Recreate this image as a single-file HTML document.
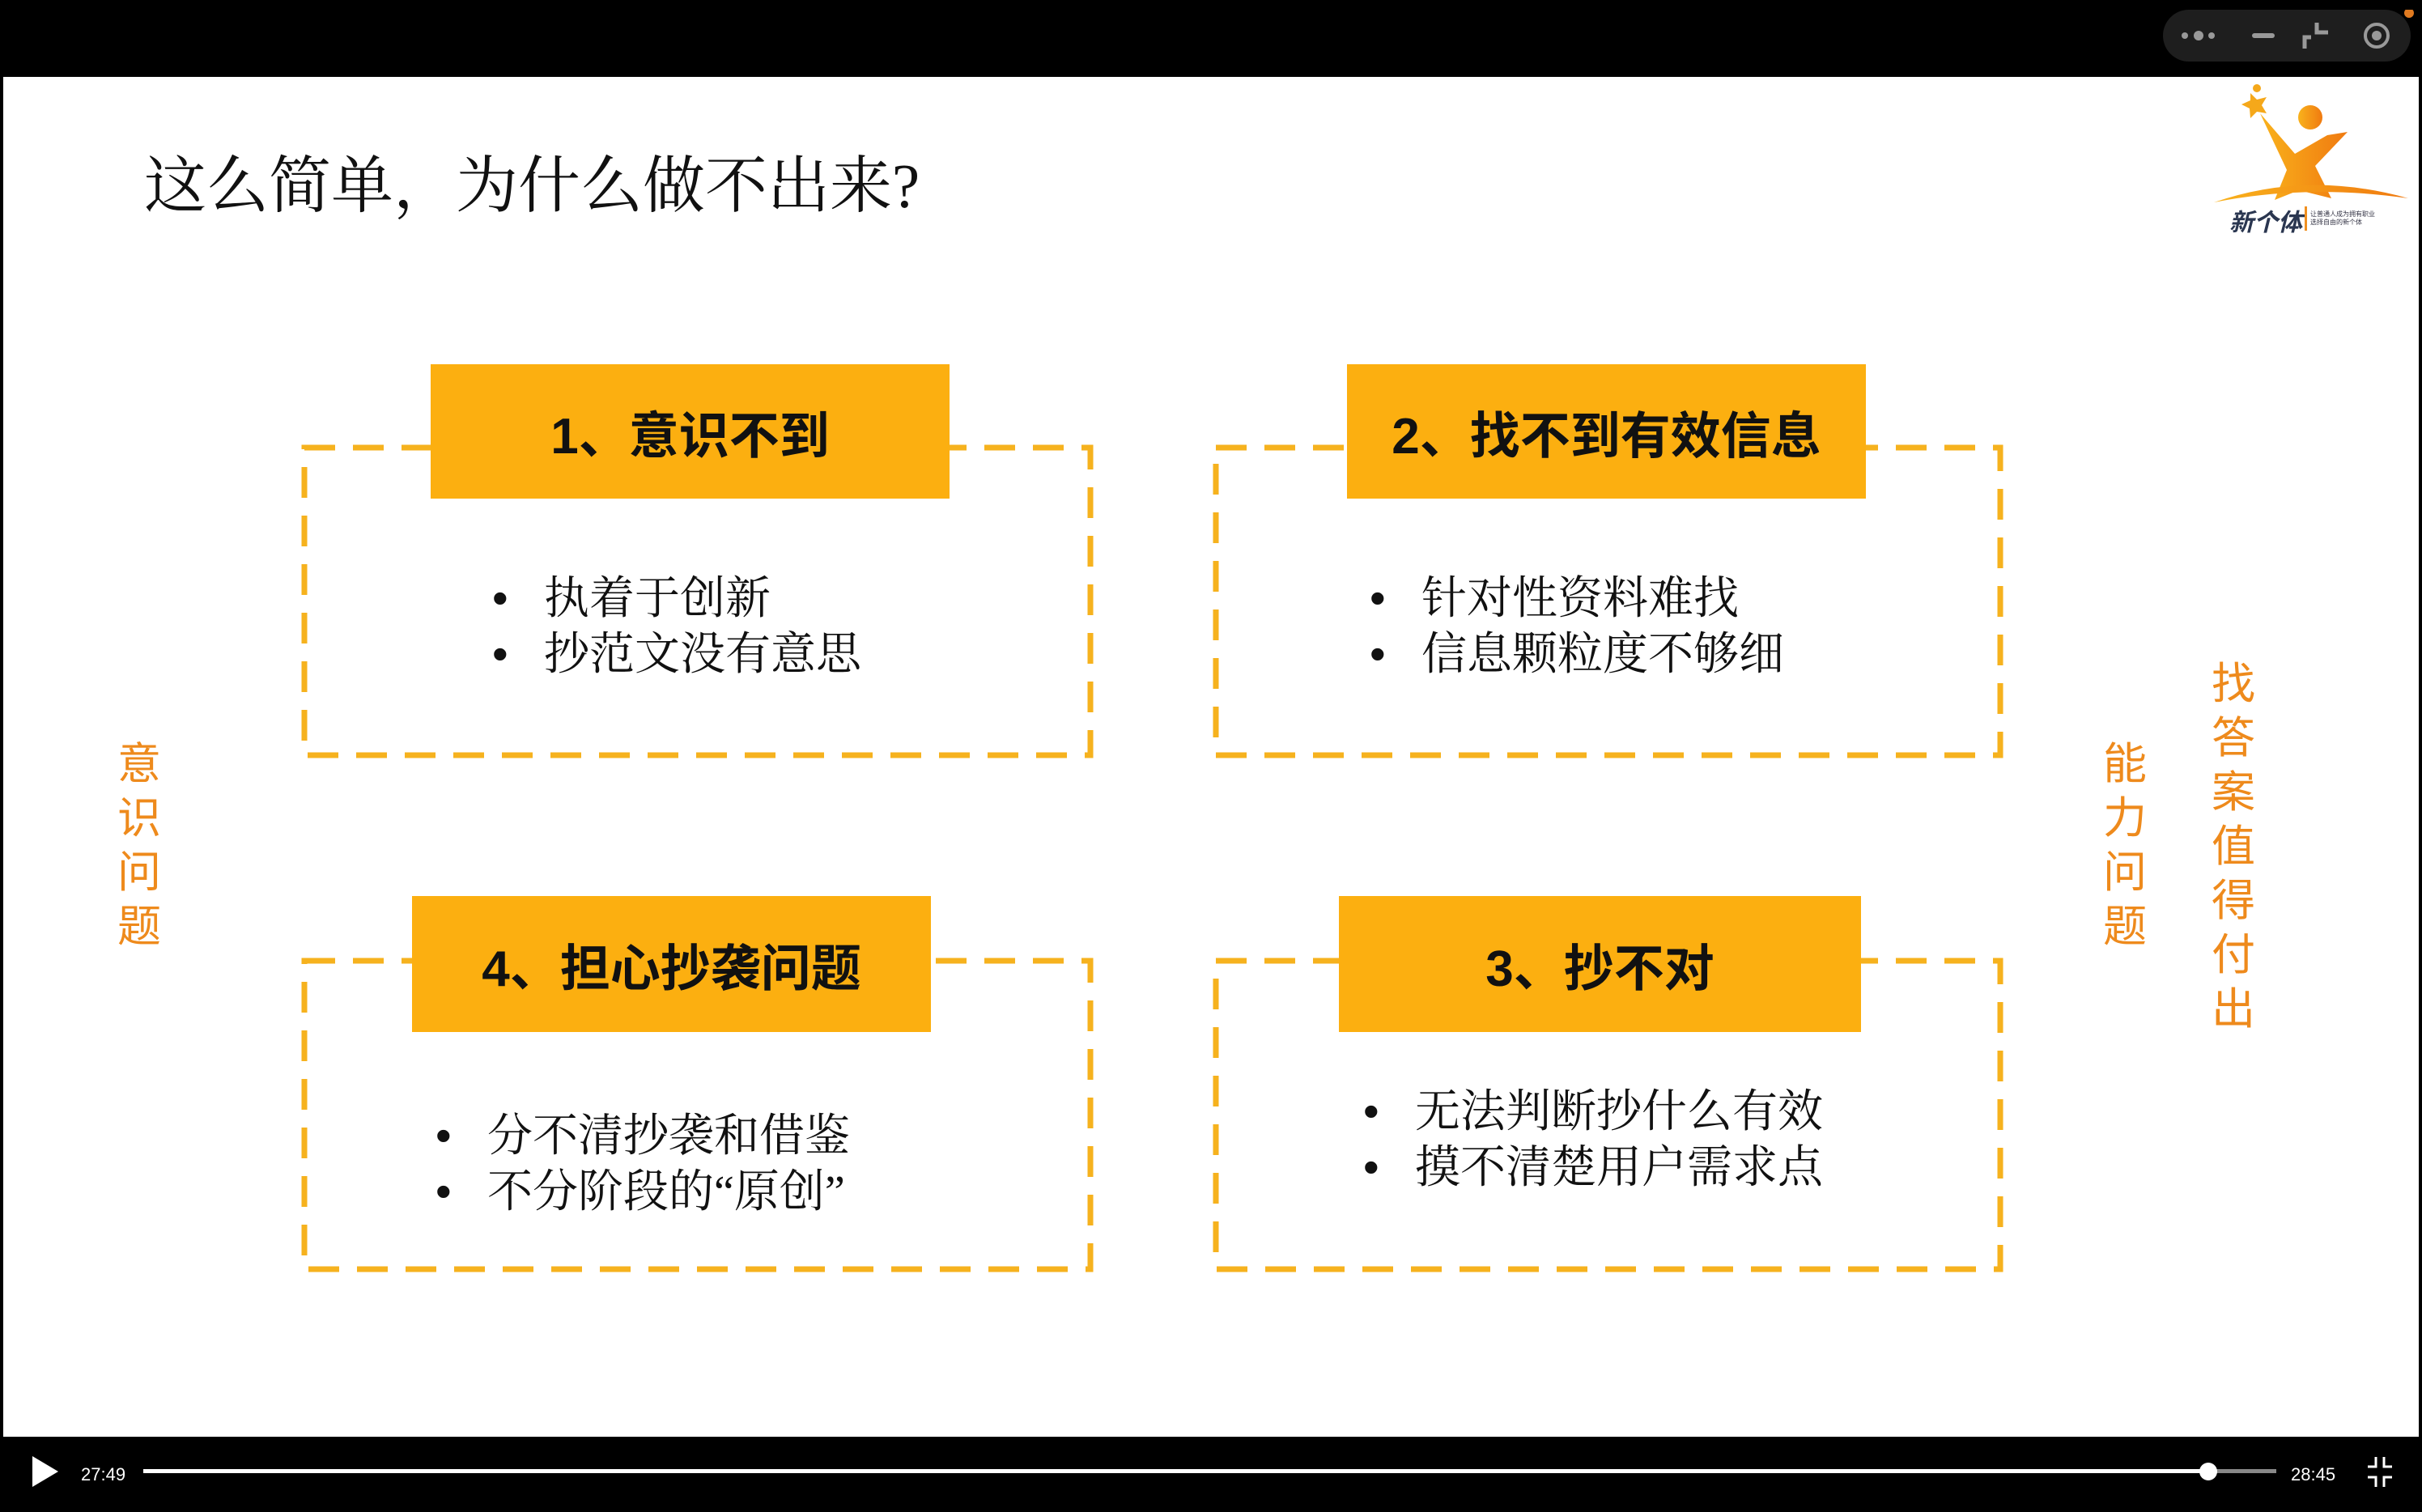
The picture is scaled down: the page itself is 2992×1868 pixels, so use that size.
<!DOCTYPE html>
<html><head><meta charset="utf-8"><style>
*{margin:0;padding:0;box-sizing:border-box}
body{width:2992px;height:1868px;background:#000;position:relative;overflow:hidden;font-family:"Liberation Sans","Noto Sans CJK SC",sans-serif}
.slide{position:absolute;left:4px;top:95px;width:2984px;height:1680px;background:#fff}
.t{position:absolute;white-space:nowrap;line-height:1}
.lab{position:absolute;background:#FCAF10;display:flex;align-items:center;justify-content:center;font-size:62px;font-weight:bold;color:#111}
.b{position:absolute;font-size:56px;color:#111;white-space:nowrap;line-height:67px;font-family:"Liberation Serif","Noto Serif CJK SC",serif}
.b span{display:inline-block;width:64px;font-family:"Liberation Sans",sans-serif}
.side{position:absolute;color:#EE8A1C;font-size:54px;width:60px;line-height:67px;text-align:center;font-family:"Noto Sans CJK SC",sans-serif}
</style></head><body>
<div class="slide"></div>
<svg width="2992" height="1868" style="position:absolute;left:0;top:0">
<g fill="none" stroke="#F6B21E" stroke-width="7" stroke-dasharray="38 22">
<rect x="376" y="553" width="971" height="380"/>
<rect x="1502" y="553" width="969" height="380"/>
<rect x="376" y="1187" width="971" height="381"/>
<rect x="1502" y="1187" width="969" height="381"/>
</g>
</svg>
<div class="t" style="left:178px;top:192px;font-size:77px;color:#111;font-family:'Liberation Serif','Noto Serif CJK SC',serif">这么简单，为什么做不出来?</div>
<div class="lab" style="left:532px;top:450px;width:641px;height:166px">1、意识不到</div>
<div class="lab" style="left:1664px;top:450px;width:641px;height:166px">2、找不到有效信息</div>
<div class="lab" style="left:509px;top:1107px;width:641px;height:168px">4、担心抄袭问题</div>
<div class="lab" style="left:1654px;top:1107px;width:645px;height:168px">3、抄不对</div>
<div class="b" style="left:608px;top:705px"><span>•</span>执着于创新<br><span>•</span>抄范文没有意思</div>
<div class="b" style="left:1692px;top:705px"><span>•</span>针对性资料难找<br><span>•</span>信息颗粒度不够细</div>
<div class="b" style="left:538px;top:1369px"><span>•</span>分不清抄袭和借鉴<br><span>•</span>不分阶段的“原创”</div>
<div class="b" style="left:1684px;top:1339px"><span>•</span>无法判断抄什么有效<br><span>•</span>摸不清楚用户需求点</div>
<div class="side" style="left:142px;top:905px">意<br>识<br>问<br>题</div>
<div class="side" style="left:2595px;top:905px">能<br>力<br>问<br>题</div>
<div class="side" style="left:2729px;top:806px">找<br>答<br>案<br>值<br>得<br>付<br>出</div>
<svg style="position:absolute;left:2730px;top:95px" width="262" height="200" viewBox="0 0 262 200">
<defs><linearGradient id="g" x1="0" x2="1"><stop offset="0" stop-color="#F9B21C"/><stop offset="1" stop-color="#F07A10"/></linearGradient></defs>
<path d="M50 20 l8 8 12-3-6 10 6 10-12-2-8 8-1-12-10-5 11-5z" fill="#F5A81A"/>
<circle cx="58" cy="14" r="5" fill="#F5A81A"/>
<path d="M62 45 L105 95 L145 72 L170 68 L130 110 L150 150 L110 140 L80 152 L95 115 Z" fill="url(#g)"/>
<circle cx="124" cy="50" r="15" fill="url(#g)"/>
<path d="M5 155 Q120 115 245 150 Q120 132 5 155Z" fill="url(#g)"/>
<text x="24" y="190" font-size="30" font-weight="bold" font-style="italic" fill="#2a3650" font-family="Noto Sans CJK SC,sans-serif">新个体</text>
<rect x="117" y="160" width="3" height="30" fill="#F09020"/>
<text x="124" y="172" font-size="8" fill="#334">让普通人成为拥有职业</text>
<text x="124" y="182" font-size="8" fill="#334">选择自由的新个体</text>
</svg>
<div style="position:absolute;left:2672px;top:12px;width:306px;height:64px;border-radius:32px;background:#1e1e1e"></div>
<svg style="position:absolute;left:2672px;top:12px" width="320" height="64">
<circle cx="27" cy="32" r="4" fill="#999"/><circle cx="44" cy="32" r="6" fill="#999"/><circle cx="60" cy="32" r="4" fill="#999"/>
<rect x="110" y="29" width="28" height="6" rx="3" fill="#999"/>
<path d="M190 16 v12 h14 M183 34 h-8 v14" stroke="#999" stroke-width="5" fill="none"/>
<circle cx="264" cy="32" r="14" stroke="#999" stroke-width="4" fill="none"/><circle cx="264" cy="32" r="6" fill="#999"/>
<circle cx="304" cy="4" r="6" fill="#E07A20"/>
</svg>
<svg style="position:absolute;left:0;top:1775px" width="2992" height="93">
<path d="M40 24 L72 43 L40 62 Z" fill="#fff"/>
<rect x="177" y="40" width="2551" height="5" fill="#fff"/>
<rect x="2728" y="40" width="84" height="5" fill="#888"/>
<circle cx="2728" cy="43" r="11" fill="#fff"/>
<text x="100" y="54" font-size="22" fill="#fff" font-family="Liberation Sans">27:49</text>
<text x="2830" y="54" font-size="22" fill="#fff" font-family="Liberation Sans">28:45</text>
<path d="M2935 25 v12 h-10 M2945 25 v12 h10 M2935 62 v-12 h-10 M2945 62 v-12 h10" stroke="#fff" stroke-width="3" fill="none"/>
</svg>
</body></html>
